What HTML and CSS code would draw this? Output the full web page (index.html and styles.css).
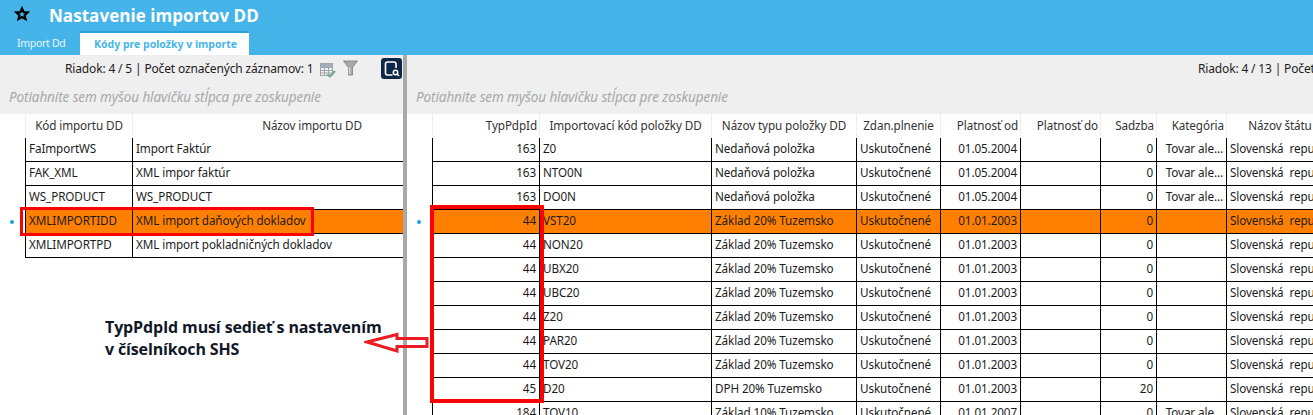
FILE: index.html
```html
<!DOCTYPE html>
<html lang="sk">
<head>
<meta charset="utf-8">
<title>Nastavenie importov DD</title>
<link rel="stylesheet" href="styles.css">
</head>
<body>
<header class="top">
  <div class="titlebar">
    <svg class="star" width="16" height="16" viewBox="0 0 16 16"><path d="M8 2.400l1.600 3.700 4 .3-3 2.700 .9 3.900L8 11l-3.500 2 .9-3.900-3-2.700 4-.3z" fill="none" stroke="#000" stroke-width="2.200"/></svg>
    <h1 class="title">Nastavenie importov DD</h1>
  </div>
  <nav class="tabs">
    <span class="tab">Import Dd</span>
    <span class="tab active">Kódy pre položky v importe</span>
  </nav>
</header>
<main class="panes">
  <section class="pane left">
    <div class="status">
      <span>Riadok: 4 / 5 | Počet označených záznamov: 1</span>
      <svg class="ico-grid" width="16" height="16" viewBox="0 0 16 16"><rect x="0.500" y="1.500" width="12" height="12" fill="#f2f3f4" stroke="#a0a5aa"/><path d="M0.500 5.500h12M0.500 8.500h12M0.500 11h12M4.500 1.500v12M8.500 1.500v12" stroke="#a0a5aa"/><rect x="1" y="2" width="11" height="3" fill="#a4aeb8"/><path d="M7.500 12l2.400 2.400L15 9" fill="none" stroke="#73ad94" stroke-width="2.200"/></svg>
      <svg class="ico-filter" width="15" height="16" viewBox="0 0 15 16"><path d="M0.500 1h14L9.500 7.500V15h-4V7.500z" fill="#a8a8a8" stroke="#8c8c8c"/><path d="M6.500 7.500V14" stroke="#dcdcdc" stroke-width="1.400"/></svg>
      <svg class="ico-search" width="21" height="21" viewBox="0 0 21 21"><rect width="21" height="21" rx="3" fill="#0f2747"/><path d="M11.500 17H6.500A2 2 0 0 1 4.500 15V6A2 2 0 0 1 6.500 4H13A2 2 0 0 1 15 6V10" fill="none" stroke="#fff" stroke-width="1.600"/><circle cx="14.500" cy="14.500" r="2.200" fill="none" stroke="#fff" stroke-width="1.500"/><path d="M16 16l2 2" stroke="#fff" stroke-width="1.500"/></svg>
    </div>
    <div class="group">Potiahnite sem myšou hlavičku stĺpca pre zoskupenie</div>
    <div class="grid">
      <div class="row head"><span class="c gut"></span><span class="c ctr">Kód importu DD</span><span class="c ctr">Názov importu DD</span></div>
      <div class="row"><span class="c gut"></span><span class="c">FaImportWS</span><span class="c">Import Faktúr</span></div>
      <div class="row"><span class="c gut"></span><span class="c">FAK_XML</span><span class="c">XML impor faktúr</span></div>
      <div class="row"><span class="c gut"></span><span class="c">WS_PRODUCT</span><span class="c">WS_PRODUCT</span></div>
      <div class="row sel"><span class="c gut"><i class="dot"></i></span><span class="c">XMLIMPORTIDD</span><span class="c">XML import daňových dokladov</span></div>
      <div class="row"><span class="c gut"></span><span class="c">XMLIMPORTPD</span><span class="c">XML import pokladničných dokladov</span></div>
    </div>
    <div class="box box-left"></div>
    <p class="note">TypPdpId musí sedieť s nastavením<br>v číselníkoch SHS</p>
  </section>
  <div class="splitter"></div>
  <section class="pane right">
    <div class="status"><span>Riadok: 4 / 13 | Počet označených záznamov: 1</span></div>
    <div class="group">Potiahnite sem myšou hlavičku stĺpca pre zoskupenie</div>
    <div class="grid">
      <div class="row head"><span class="c gut"></span><span class="c end">TypPdpId</span><span class="c ctr">Importovací kód položky DD</span><span class="c ctr">Názov typu položky DD</span><span class="c ctr">Zdan.plnenie</span><span class="c end">Platnosť od</span><span class="c end">Platnosť do</span><span class="c end">Sadzba</span><span class="c end">Kategória</span><span class="c ctr">Názov štátu</span></div>
      <div class="row"><span class="c gut"></span><span class="c end">163</span><span class="c">Z0</span><span class="c">Nedaňová položka</span><span class="c">Uskutočnené</span><span class="c end">01.05.2004</span><span class="c"></span><span class="c end">0</span><span class="c end">Tovar ale...</span><span class="c">Slovenská&nbsp; republika</span></div>
      <div class="row"><span class="c gut"></span><span class="c end">163</span><span class="c">NTO0N</span><span class="c">Nedaňová položka</span><span class="c">Uskutočnené</span><span class="c end">01.05.2004</span><span class="c"></span><span class="c end">0</span><span class="c end">Tovar ale...</span><span class="c">Slovenská&nbsp; republika</span></div>
      <div class="row"><span class="c gut"></span><span class="c end">163</span><span class="c">DO0N</span><span class="c">Nedaňová položka</span><span class="c">Uskutočnené</span><span class="c end">01.05.2004</span><span class="c"></span><span class="c end">0</span><span class="c end">Tovar ale...</span><span class="c">Slovenská&nbsp; republika</span></div>
      <div class="row sel"><span class="c gut"><i class="dot"></i></span><span class="c end">44</span><span class="c">VST20</span><span class="c">Základ 20% Tuzemsko</span><span class="c">Uskutočnené</span><span class="c end">01.01.2003</span><span class="c"></span><span class="c end">0</span><span class="c end"></span><span class="c">Slovenská&nbsp; republika</span></div>
      <div class="row"><span class="c gut"></span><span class="c end">44</span><span class="c">NON20</span><span class="c">Základ 20% Tuzemsko</span><span class="c">Uskutočnené</span><span class="c end">01.01.2003</span><span class="c"></span><span class="c end">0</span><span class="c end"></span><span class="c">Slovenská&nbsp; republika</span></div>
      <div class="row"><span class="c gut"></span><span class="c end">44</span><span class="c">UBX20</span><span class="c">Základ 20% Tuzemsko</span><span class="c">Uskutočnené</span><span class="c end">01.01.2003</span><span class="c"></span><span class="c end">0</span><span class="c end"></span><span class="c">Slovenská&nbsp; republika</span></div>
      <div class="row"><span class="c gut"></span><span class="c end">44</span><span class="c">UBC20</span><span class="c">Základ 20% Tuzemsko</span><span class="c">Uskutočnené</span><span class="c end">01.01.2003</span><span class="c"></span><span class="c end">0</span><span class="c end"></span><span class="c">Slovenská&nbsp; republika</span></div>
      <div class="row"><span class="c gut"></span><span class="c end">44</span><span class="c">Z20</span><span class="c">Základ 20% Tuzemsko</span><span class="c">Uskutočnené</span><span class="c end">01.01.2003</span><span class="c"></span><span class="c end">0</span><span class="c end"></span><span class="c">Slovenská&nbsp; republika</span></div>
      <div class="row"><span class="c gut"></span><span class="c end">44</span><span class="c">PAR20</span><span class="c">Základ 20% Tuzemsko</span><span class="c">Uskutočnené</span><span class="c end">01.01.2003</span><span class="c"></span><span class="c end">0</span><span class="c end"></span><span class="c">Slovenská&nbsp; republika</span></div>
      <div class="row"><span class="c gut"></span><span class="c end">44</span><span class="c">TOV20</span><span class="c">Základ 20% Tuzemsko</span><span class="c">Uskutočnené</span><span class="c end">01.01.2003</span><span class="c"></span><span class="c end">0</span><span class="c end"></span><span class="c">Slovenská&nbsp; republika</span></div>
      <div class="row"><span class="c gut"></span><span class="c end">45</span><span class="c">D20</span><span class="c">DPH 20% Tuzemsko</span><span class="c">Uskutočnené</span><span class="c end">01.01.2003</span><span class="c"></span><span class="c end">20</span><span class="c end"></span><span class="c">Slovenská&nbsp; republika</span></div>
      <div class="row"><span class="c gut"></span><span class="c end">184</span><span class="c">TOV10</span><span class="c">Základ 10% Tuzemsko</span><span class="c">Uskutočnené</span><span class="c end">01.01.2007</span><span class="c"></span><span class="c end">0</span><span class="c end">Tovar ale...</span><span class="c">Slovenská&nbsp; republika</span></div>
    </div>
    <div class="box box-right"></div>
  </section>
  <svg class="arrow" width="66" height="24" viewBox="0 0 66 24"><path d="M3 11L33 3.500V7.500H63V15.500H33V20z" fill="none" stroke="#ed1c24" stroke-width="3"/></svg>
</main>
</body>
</html>
```
FILE: styles.css
```css
* { box-sizing: border-box; }
html, body { margin: 0; height: 100%; overflow: hidden; background: #fff; }
body { font: 11.7px/16px "Noto Sans", "Open Sans", sans-serif; color: #1c1c1c; letter-spacing: -0.1px; }

.top { height: 55px; background: #45b5e9; color: #fff; }
.titlebar { height: 31px; display: flex; align-items: center; padding-left: 14px; }
.star { flex: none; margin-top: -3px; }
.title { margin: 0 0 0 19px; font: 700 17px/24px "Open Sans", sans-serif; letter-spacing: 0.05px; white-space: nowrap; }
.tabs { height: 24px; display: flex; }
.tab { width: 80px; padding-left: 17px; font-size: 10.5px; line-height: 24px; letter-spacing: -0.3px; color: #eaf6fc; white-space: nowrap; }
.tab.active { width: 169px; padding: 0 0 0 14px; background: #fff; border-top: 2px solid #2a9fd8; color: #45b5e9; font-weight: 700; line-height: 22px; letter-spacing: 0; }

.panes { position: relative; display: flex; height: 360px; }
.pane { position: relative; overflow: hidden; }
.pane.left { width: 403px; flex: none; }
.pane.right { flex: 1; min-width: 0; }
.splitter { width: 4px; flex: none; background: #a9a9a9; }

.status { height: 28px; background: #efefef; display: flex; align-items: center; font-size: 12px; letter-spacing: -0.16px; white-space: nowrap; }
.left .status { padding: 0 1px 0 65px; }
.right .status { padding: 0 0 0 791px; }
.ico-grid { margin: 1px 0 0 7px; flex: none; }
.ico-filter { margin: -2px 0 0 7px; flex: none; }
.ico-search { margin: -2px 0 0 auto; flex: none; }
.group { height: 31px; background: #efefef; padding: 6px 0 0 9px; font-size: 13.5px; font-style: italic; color: #a8a8a8; white-space: nowrap; }

.row { display: grid; height: 24px; }
.left .row { grid-template-columns: 25px 108px 358px; }
.right .row { grid-template-columns: 25px 108px 172px 145px 84px 80px 80px 56px 70px 106px; }
.c { display: block; min-width: 0; padding: 2px 3px 0 3px; border-right: 1px solid #000; border-bottom: 1px solid #000; white-space: nowrap; overflow: hidden; }
.c.gut { border: 0; position: relative; padding: 0; }
.gut + .c { border-left: 1px solid #000; }
.c.end { text-align: right; padding-right: 3px; }
.c.ctr { text-align: center; }
.head .c { padding-top: 3px; border-color: #eee; border-bottom: 0; color: #333; }
.head .c.end { padding-right: 2px; }
.left .row .c:last-child, .right .row .c:last-child { border-right: 0; }
.row.sel .c:not(.gut) { background: #ff8000; }
.dot { position: absolute; left: 10px; top: 10px; width: 4px; height: 4px; border-radius: 50%; background: #1ba1e2; }

.box { position: absolute; border: 3px solid #f00; pointer-events: none; }
.box-left { left: 20px; top: 152px; width: 294px; height: 29px; }
.box-right { left: 23px; top: 150px; width: 114px; height: 198px; border-width: 4px; }
.note { position: absolute; left: 105px; top: 261px; margin: 0; font: 700 16px/22px "Open Sans", sans-serif; color: #101828; letter-spacing: -0.14px; white-space: nowrap; }
.arrow { position: absolute; left: 364px; top: 276px; }
```
